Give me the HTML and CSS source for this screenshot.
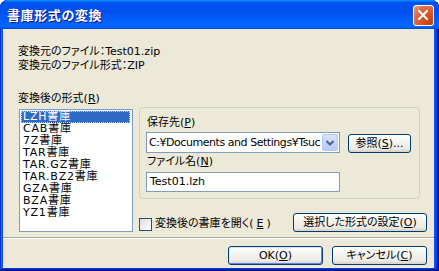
FILE: index.html
```html
<!DOCTYPE html>
<html lang="ja">
<head>
<meta charset="utf-8">
<link rel="stylesheet" href="styles.css">
</head>
<body>
<div class="window">
  <div class="titlebar">
    <span class="title">書庫形式の変換</span>
    <span class="close"><svg width="21" height="21" viewBox="0 0 21 21"><path d="M6 6 L14 14 M14 6 L6 14" stroke="#fff" stroke-width="2" stroke-linecap="square"/></svg></span>
  </div>
  <div class="body">
    <div class="line">変換元のファイル：Test01.zip</div>
    <div class="line">変換元のファイル形式：ZIP</div>
    <div class="label-fmt">変換後の形式(<u>R</u>)</div>
    <div class="main">
      <ul class="listbox">
        <li class="sel"><span>LZH書庫</span></li>
        <li><span>CAB書庫</span></li>
        <li><span>7Z書庫</span></li>
        <li><span>TAR書庫</span></li>
        <li><span>TAR.GZ書庫</span></li>
        <li><span>TAR.BZ2書庫</span></li>
        <li><span>GZA書庫</span></li>
        <li><span>BZA書庫</span></li>
        <li><span>YZ1書庫</span></li>
      </ul>
      <div class="right">
        <div class="group">
          <div class="glabel">保存先(<u>P</u>)</div>
          <div class="row">
            <div class="combo">
              <span class="ctext">C:¥Documents and Settings¥Tsuc</span>
              <span class="drop"><svg width="14" height="17" viewBox="0 0 14 17"><path d="M3.5 7 L7 10.5 L10.5 7" stroke="#4D6185" stroke-width="2" fill="none"/></svg></span>
            </div>
            <button class="btn browse">参照(<u>S</u>)...</button>
          </div>
          <div class="glabel second">ファイル名(<u>N</u>)</div>
          <div class="input">Test01.lzh</div>
        </div>
        <div class="opts">
          <label class="check"><span class="box"></span>変換後の書庫を開く(<u>E</u>)</label>
          <button class="btn settings">選択した形式の設定(<u>O</u>)</button>
        </div>
      </div>
    </div>
    <div class="sep"></div>
    <div class="footer">
      <button class="btn wide default">OK(<u>O</u>)</button>
      <button class="btn wide">キャンセル(<u>C</u>)</button>
    </div>
  </div>
</div>
</body>
</html>
```
FILE: styles.css
```css
html, body {
  margin: 0;
  padding: 0;
  background: #fff;
}
body {
  font-family: "DejaVu Sans", "Noto Sans CJK JP", sans-serif;
  font-size: 11px;
  font-feature-settings: "palt";
  color: #000;
}
.window {
  width: 439px;
  height: 271px;
  box-sizing: border-box;
  background: #0A52E6;
  border-radius: 8px 8px 0 0;
  display: flex;
  flex-direction: column;
  box-shadow: inset -1px -1px #00138C, inset 1px 1px #0831D9, inset -2px -2px #001EA0, inset 2px 2px #166AEE, inset -3px -3px #003BDA, inset 3px 3px #0855DD;
}
.titlebar {
  height: 29px;
  flex: none;
  box-sizing: border-box;
  background: linear-gradient(180deg, #0997FF 0, #0053EE 9%, #0050EE 40%, #0066FF 86%, #0066FF 92%, #005BFF 95%, #0546DC 100%);
  border-radius: 8px 8px 0 0;
  display: flex;
  align-items: center;
  justify-content: space-between;
  padding: 0 5px 0 7px;
}
.title {
  font-family: "Noto Sans CJK JP", sans-serif;
  color: #fff;
  font-weight: 700;
  font-size: 13px;
  letter-spacing: 0.6px;
  text-shadow: 1px 1px #0F1089;
  font-feature-settings: normal;
  line-height: 16px;
  margin-top: 1px;
}
.close {
  width: 21px;
  height: 21px;
  box-sizing: border-box;
  border: 1px solid #fff;
  border-radius: 3px;
  background: radial-gradient(circle at 85% 85%, #C9400E 0, #DA5A2E 50%, #E0744F 75%, #F0A68C 100%);
  display: flex;
  margin-top: 1px;
}
.close svg {
  margin: -1px;
}
.body {
  flex: 1;
  margin: 0 5px 3px 3px;
  background: #ECE9D8;
  padding: 16px 7px 3px 15px;
  display: flex;
  flex-direction: column;
}
.line {
  line-height: 14px;
  height: 14px;
}
.label-fmt {
  margin-top: 19px;
  line-height: 14px;
  height: 15px;
}
.main {
  display: flex;
  gap: 6px;
  height: 125px;
}
.listbox {
  list-style: none;
  margin: 2px 0 0 1px;
  padding: 1px;
  width: 114px;
  height: 123px;
  box-sizing: border-box;
  background: #fff;
  border: 1px solid #7F9DB9;
}
.listbox li {
  height: 12px;
  line-height: 12px;
  padding-left: 2px;
  box-sizing: border-box;
  white-space: nowrap;
  letter-spacing: 0.8px;
}
.listbox li.sel {
  background: #316AC5;
  color: #fff;
  outline: 1px dotted #D8E46A;
  outline-offset: -1px;
  width: 109px;
}
.right {
  width: 288px;
  display: flex;
  flex-direction: column;
}
.group {
  width: 281px;
  height: 92px;
  box-sizing: border-box;
  border: 1px solid #D0D0BF;
  border-radius: 4px;
  padding: 8px 0 0 6px;
}
.glabel {
  line-height: 14px;
  height: 14px;
  padding-left: 1px;
}
.glabel.second {
  margin-top: 2px;
}
.row {
  display: flex;
  align-items: center;
  gap: 8px;
  margin-top: 2px;
}
.combo {
  width: 194px;
  height: 21px;
  box-sizing: border-box;
  border: 1px solid #7F9DB9;
  background: #fff;
  display: flex;
  align-items: center;
  overflow: hidden;
}
.ctext {
  white-space: nowrap;
  padding-left: 2px;
  flex: 1;
  overflow: hidden;
  line-height: 17px;
  letter-spacing: -0.45px;
}
.drop {
  flex: none;
  width: 16px;
  height: 17px;
  margin-right: 1px;
  box-sizing: border-box;
  border-radius: 2px;
  background: linear-gradient(180deg, #D8E4FE, #B6CAF8);
  border: 1px solid #B3C8F5;
  display: flex;
  align-items: center;
  justify-content: center;
}
.input {
  margin-top: 3px;
  width: 194px;
  height: 20px;
  box-sizing: border-box;
  border: 1px solid #7F9DB9;
  background: #fff;
  padding-left: 3px;
  line-height: 18px;
}
.btn {
  font-family: inherit;
  font-size: 11px;
  font-feature-settings: "palt";
  color: #000;
  height: 19px;
  box-sizing: border-box;
  border: 1px solid #003C74;
  border-radius: 3px;
  background: linear-gradient(180deg, #FFFFFF 0, #F4F3EE 40%, #ECEBE6 80%, #D6D0C5 100%);
  padding: 0;
  line-height: 16px;
  text-align: center;
}
.browse {
  width: 63px;
  margin-top: 1px;
  margin-bottom: -1px;
}
.opts {
  margin-top: 14px;
  display: flex;
  align-items: center;
  justify-content: space-between;
  height: 19px;
}
.check {
  display: flex;
  align-items: center;
  gap: 3px;
  line-height: 14px;
  margin-top: 3px;
}
.box {
  width: 13px;
  height: 13px;
  box-sizing: border-box;
  border: 1px solid #1C5180;
  background: linear-gradient(135deg, #DCDCD7, #FFFFFF);
}
.settings {
  width: 134px;
}
.sep {
  margin-top: 5px;
  margin-left: -15px;
  margin-right: -7px;
  border-top: 1px solid #ACA899;
  border-bottom: 1px solid #FFFFFF;
  height: 0;
}
.footer {
  margin-top: 7px;
  display: flex;
  justify-content: flex-end;
  gap: 9px;
}
.wide {
  width: 95px;
}
.default {
  box-shadow: inset 1px 1px #CEE7FF, inset -1px -1px #6982EE;
}
```
